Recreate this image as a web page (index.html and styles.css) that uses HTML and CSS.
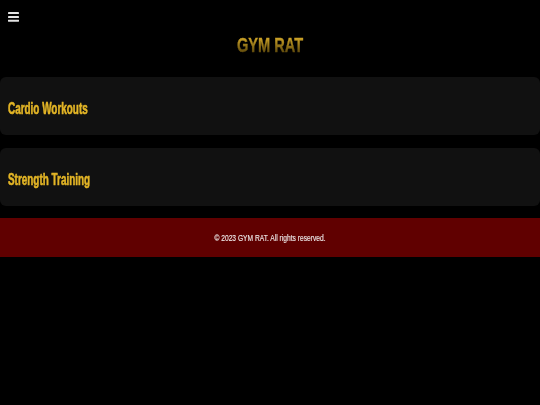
FILE: index.html
```html
<!DOCTYPE html>
<html lang="en">
<head>
<meta charset="utf-8">
<title>GYM RAT</title>
<link rel="stylesheet" href="styles.css">
</head>
<body>
<header class="topbar">
  <button class="menu-btn" aria-label="Menu">
    <svg width="11" height="10" viewBox="0 0 11 10"><rect x="0" y="0" width="11" height="2" rx="0.4" fill="#e4e4e4"/><rect x="0" y="4" width="11" height="2" rx="0.4" fill="#e4e4e4"/><rect x="0" y="7.7" width="11" height="2" rx="0.4" fill="#e4e4e4"/></svg>
  </button>
  <h1 class="brand">GYM RAT</h1>
</header>
<main class="sections">
  <section class="card"><h2 class="card-title">Cardio Workouts</h2></section>
  <section class="card"><h2 class="card-title">Strength Training</h2></section>
</main>
<footer class="footer">
  <p class="footer-text">© 2023 GYM RAT. All rights reserved.</p>
</footer>
</body>
</html>
```
FILE: styles.css
```css
html, body {
  margin: 0;
  padding: 0;
  background: #000;
  font-family: "Liberation Sans", Arial, sans-serif;
}
.topbar {
  padding: 12px 8px 0;
}
.menu-btn {
  display: block;
  background: none;
  border: 0;
  padding: 0;
  width: 11px;
  height: 10px;
  line-height: 0;
}
.brand {
  margin: 11px 0 0;
  text-align: center;
  font-size: 20px;
  line-height: 24px;
  font-weight: bold;
  transform: scaleX(0.73);
  transform-origin: center;
  background: linear-gradient(to bottom, #cfa528 20%, #4f3c07 90%);
  -webkit-background-clip: text;
  background-clip: text;
  color: transparent;
  -webkit-text-stroke: 0.4px transparent;
}
.sections {
  margin-top: 20px;
  display: flex;
  flex-direction: column;
  gap: 13px;
}
.card {
  background: #111;
  border-radius: 6px;
  padding: 23px 8px 17px;
}
.card-title {
  margin: 0;
  font-size: 16px;
  line-height: 18px;
  font-weight: bold;
  color: #e3b526;
  -webkit-text-stroke: 0.6px #e3b526;
  transform: scaleX(0.62);
  transform-origin: left center;
}
.footer {
  margin-top: 12px;
  background: #600000;
  padding: 15px 0 13px;
}
.footer-text {
  margin: 0;
  font-size: 9px;
  line-height: 11px;
  text-align: center;
  color: #ece6e6;
  -webkit-text-stroke: 0.15px #ece6e6;
  transform: scaleX(0.74);
  transform-origin: center;
}
```
